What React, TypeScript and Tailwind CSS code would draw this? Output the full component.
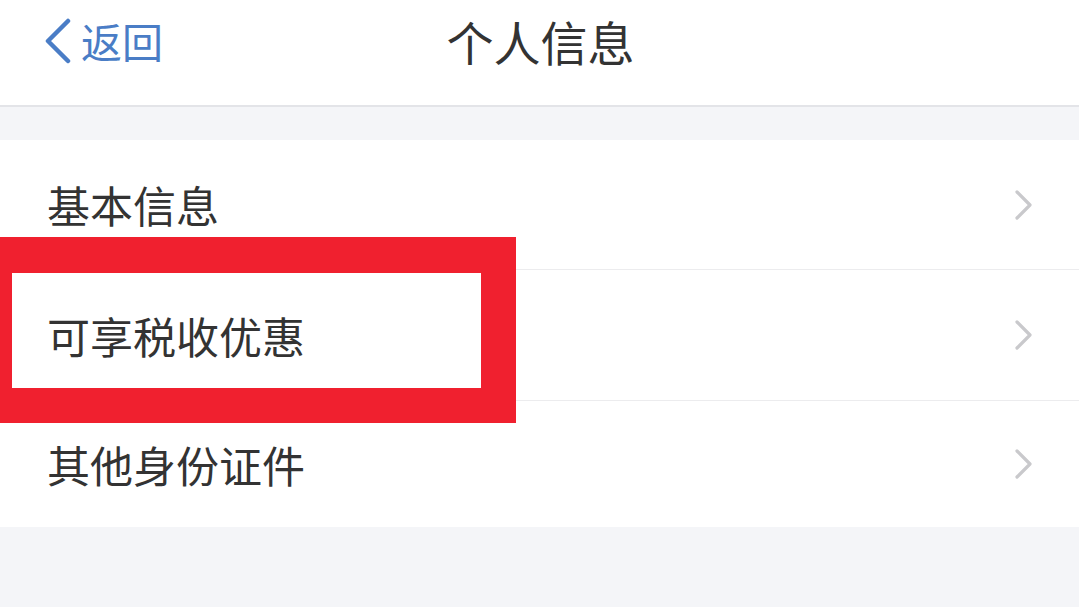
import React from "react";

const font = { fontFamily: '"Noto Sans CJK SC", "Noto Sans", sans-serif' };

function Chevron() {
  return (
    <svg width="20" height="32" viewBox="0 0 20 32" className="shrink-0">
      <path d="M3 3 L16 16 L3 29" fill="none" stroke="#c9c9cc" strokeWidth="3.2" strokeLinecap="round" strokeLinejoin="round" />
    </svg>
  );
}

function Row({ label, h, border }: { label: string; h: string; border?: boolean }) {
  return (
    <div className={`flex items-center pl-[47px] pr-[45px] ${h} ${border ? "border-b border-[#ececee]" : ""}`}>
      <span className="flex-1 text-[43px] leading-none text-[#333333]">{label}</span>
      <Chevron />
    </div>
  );
}

export default function App() {
  return (
    <div className="relative w-[1079px] h-[607px] overflow-hidden bg-[#f4f5f8]" style={font}>
      <div className="relative flex items-center h-[107px] pb-[24px] bg-white border-b-2 border-[#e3e4e8]">
        <div className="flex items-center pl-[43px] gap-[10px] text-[#4a7dc6]">
          <svg width="28" height="46" viewBox="0 0 28 46">
            <path d="M25 3 L5 23 L25 43" fill="none" stroke="#4a7dc6" strokeWidth="4.5" strokeLinecap="round" strokeLinejoin="round" />
          </svg>
          <span className="text-[41px] leading-none">返回</span>
        </div>
        <div className="absolute inset-0 pb-[24px] flex items-center justify-center pointer-events-none">
          <span className="text-[47px] leading-none text-[#333333] ml-[2px]">个人信息</span>
        </div>
      </div>
      <div className="h-[33px]" />
      <div className="bg-white">
        <Row label="基本信息" h="h-[130px]" border />
        <Row label="可享税收优惠" h="h-[131px]" border />
        <Row label="其他身份证件" h="h-[126px]" />
      </div>
      <div className="absolute left-0 top-[237px] w-[516px] h-[186px] border-[#f0202f] border-t-[36px] border-r-[35px] border-b-[35px] border-l-[12px]" />
    </div>
  );
}
